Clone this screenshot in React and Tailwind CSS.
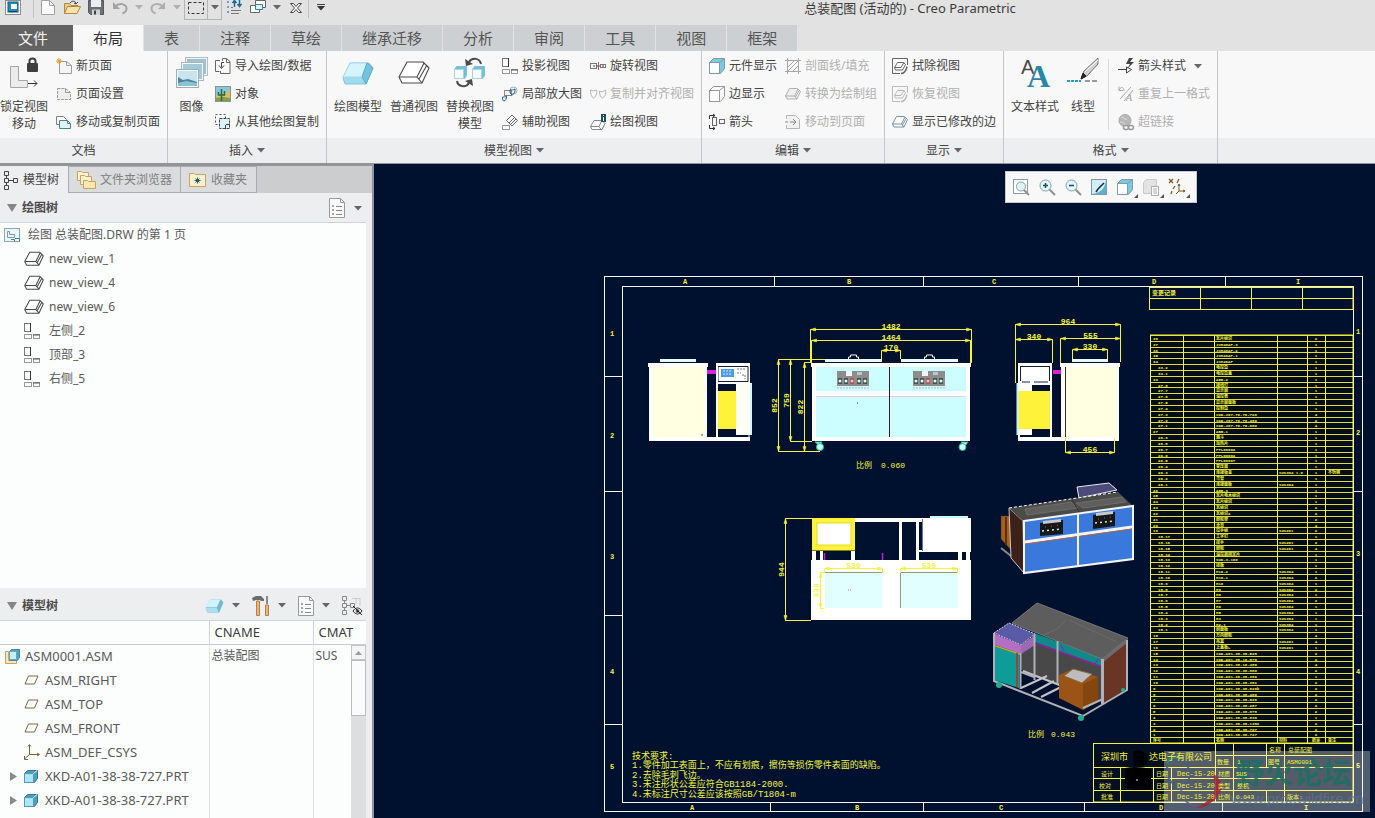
import React, { useState } from "react";

const Svg = ({ w = 16, h = 16, children }) => (
  <svg width={w} height={h} viewBox={`0 0 ${w} ${h}`} fill="none" stroke="#666" strokeWidth="1" className="shrink-0 overflow-visible" aria-hidden="true">
    {children}
  </svg>
);

const Caret = ({ color = "#666" }) => (
  <svg width="8" height="5" viewBox="0 0 8 5" className="shrink-0" aria-hidden="true">
    <path d="M0 0h8L4 4.500z" fill={color} />
  </svg>
);

// ---- quick access icons ----
const AppIcon = () => (
  <Svg w={16} h={16}>
    <rect x="0.500" y="0.500" width="15" height="14" fill="#fff" stroke="#8b8f93" />
    <rect x="3" y="2" width="10" height="10" fill="#1c8fc5" stroke="#16557d" />
    <rect x="6" y="4" width="6" height="5" fill="#fff" stroke="none" />
    <path d="M4 11.500h8" stroke="#0c3f5e" />
  </Svg>
);
const NewFile = () => (
  <Svg w={14} h={16}>
    <path d="M0.500 0.500h8l5 5v9h-13z" fill="#fdfdfd" stroke="#a0a0a0" />
    <path d="M8.500 0.500v5h5" stroke="#a0a0a0" />
  </Svg>
);
const OpenFile = () => (
  <Svg w={17} h={16}>
    <path d="M0.500 13.500v-10h5l1.500 2h7v2" fill="#f3c97b" stroke="#b3873f" />
    <path d="M0.500 13.500l3-7h13l-3.500 7z" fill="#fbe2a8" stroke="#b3873f" />
    <path d="M6 3c2-3 6-2 6 1M12 4l-2-1M12 4l2-2" stroke="#444" />
  </Svg>
);
const SaveFile = () => (
  <Svg w={16} h={16}>
    <path d="M0.500 0.500h15v14h-13l-2-2z" fill="#6c6f73" stroke="#55585c" />
    <rect x="3" y="0" width="10" height="7" fill="#e9eef2" stroke="none" />
    <rect x="4" y="9.500" width="8" height="5.500" fill="#cfd3d6" stroke="none" />
    <rect x="6" y="10.500" width="2" height="4" fill="#3e4145" stroke="none" />
  </Svg>
);
const Undo = () => (
  <Svg w={16} h={14}>
    <path d="M1 1v7h7z" fill="#a3a3a3" stroke="none" />
    <path d="M3.500 5.500c3-4 11-3 11 2 0 2-1.500 4-4 5" stroke="#a3a3a3" strokeWidth="2" />
  </Svg>
);
const Redo = () => (
  <Svg w={16} h={14}>
    <path d="M15 1v7h-7z" fill="#aeaeae" stroke="none" />
    <path d="M12.500 5.500c-3-4-11-3-11 2 0 2 1.500 4 4 5" stroke="#aeaeae" strokeWidth="2" />
  </Svg>
);
const SelectBox = () => (
  <Svg w={16} h={14}>
    <rect x="0.500" y="1.500" width="15" height="11" stroke="#333" strokeDasharray="3 2" />
  </Svg>
);
const Regenerate = () => (
  <Svg w={16} h={16}>
    <path d="M1.500 1.500h1v1h-1zM1.500 6.500h1v1h-1zM1.500 11.500h1v1h-1z" stroke="#4d8fb0" />
    <path d="M5 7.500h2M5 10.500h10M5 13.500h8" stroke="#777" />
    <path d="M8.500 7V1M6.500 3l2-2.500 2 2.500M13.500 0v6M11.500 4l2 2.500 2-2.500" stroke="#1b6b94" strokeWidth="1.500" />
  </Svg>
);
const Windows = () => (
  <Svg w={16} h={16}>
    <path d="M5.500 0.500h10v7h-10z" fill="#fff" stroke="#666" />
    <path d="M0.500 5.500h9v7h-9z" fill="#fff" stroke="#666" />
    <path d="M5.500 4.500h7v5h-7z" fill="#d9f0f7" stroke="#3c85a8" />
  </Svg>
);
const CloseX = () => (
  <Svg w={12} h={12}>
    <path d="M0.500 1.500h3l2.500 3 2.500-3h3l-4 4.500 4 4.500h-3l-2.500-3-2.500 3h-3l4-4.500z" fill="#fff" stroke="#444" />
  </Svg>
);

// ---- large ribbon icons ----
const LockView = () => (
  <Svg w={32} h={32}>
    <path d="M2.500 9.500h8v14h9v7h-17z" fill="#ececec" stroke="#a6a6a6" />
    <rect x="19" y="6" width="11" height="9" rx="1" fill="#3f3f3f" stroke="none" />
    <path d="M21.500 7V4c0-3.500 6-3.500 6 0v3" stroke="#3f3f3f" strokeWidth="2" />
    <path d="M20 26.500h9M26 23.500l3 3-3 3" stroke="#333" />
  </Svg>
);
const Images = () => (
  <Svg w={32} h={32}>
    <rect x="9.500" y="0.500" width="22" height="18" fill="#eef4f6" stroke="#b4c0c5" />
    <rect x="11" y="2" width="19" height="15" fill="#9cc3d2" stroke="none" />
    <rect x="5.500" y="5.500" width="22" height="18" fill="#f3f8f9" stroke="#a9b8bf" />
    <rect x="7" y="7" width="19" height="15" fill="#a4cad8" stroke="none" />
    <rect x="0.500" y="12.500" width="22" height="18" fill="#f9fcfd" stroke="#9dafb7" />
    <rect x="2" y="14" width="19" height="15" fill="#c8e4ee" stroke="none" />
    <path d="M2 20l5 3 5-1 9 3v4H2z" fill="#4a85a1" stroke="none" />
    <path d="M2 26l8-2 11 2v3H2z" fill="#8dc0d4" stroke="none" />
  </Svg>
);
const DrawingModel = () => (
  <Svg w={32} h={26}>
    <path d="M1 18l7-15h19l4 5-7 16H3z" fill="#9fdcf0" stroke="#86c3d6" />
    <path d="M8 3h17l-5 14H1z" fill="#d6f4fc" stroke="#a5dae9" />
    <path d="M25 3l6 5-7 16-4-7z" fill="#74c2dc" stroke="#5eadc8" />
  </Svg>
);
const Block = ({ w = 32, h = 26, stroke = "#4a4a4a", fill = "#fff" }) => (
  <svg width={w} height={h} viewBox="0 0 32 26" fill={fill} stroke={stroke} strokeWidth={w > 20 ? 1.1 : 1.7} strokeLinejoin="round" className="shrink-0" aria-hidden="true">
    <path d="M1 17L9 2h16l6 6-7 15H4z" />
    <path d="M1 17h18l7-14M19 17l5 6M21 19l8-14" fill="none" />
  </svg>
);
const ReplaceModel = () => (
  <Svg w={32} h={32}>
    <path d="M0.500 12.500l2-3h10v9l-2 3h-10z" fill="#6fc0da" stroke="#7fbdd1" />
    <rect x="0.500" y="12.500" width="9" height="9" fill="#f7fdff" stroke="#a9d5e3" />
    <path d="M18.500 12.500l2-3h10v9l-2 3h-10z" fill="#6fc0da" stroke="#7fbdd1" />
    <rect x="18.500" y="12.500" width="9" height="9" fill="#f7fdff" stroke="#a9d5e3" />
    <path d="M27 7c-1-6-9-7-12-2" stroke="#4a4a4a" strokeWidth="2" />
    <path d="M11 2l1 7 7-2z" fill="#4a4a4a" stroke="none" />
    <path d="M3 24c1 6 9 7 12 2" stroke="#4a4a4a" strokeWidth="2" />
    <path d="M19 29l-1-7-7 2z" fill="#4a4a4a" stroke="none" />
  </Svg>
);
const TextStyle = () => (
  <Svg w={30} h={32}>
    <text x="1" y="17" fontFamily="Liberation Sans" fontSize="20" fill="#4a4a4a" stroke="none">A</text>
    <text x="7" y="30" fontFamily="Liberation Serif" fontWeight="bold" fontSize="32" fill="#2a86a8" stroke="none">A</text>
  </Svg>
);
const LineStyle = () => (
  <Svg w={34} h={32}>
    <path d="M1 24h14" stroke="#2a9bc0" strokeWidth="2" strokeDasharray="3 1" />
    <path d="M19 24h14" stroke="#9a9a9a" strokeWidth="2" strokeDasharray="5 2" />
    <path d="M15 22l3-8L32 1v6L21 19z" fill="#cfcfcf" stroke="#777" />
    <path d="M15 22l2-6 3 3z" fill="#222" stroke="#222" />
    <path d="M19 15L32 3" stroke="#fff" />
  </Svg>
);

// ---- small ribbon icons ----
const NewPage = () => (
  <Svg>
    <path d="M3.500 3.500h7l5 4v8h-12z" fill="#f5f5f5" stroke="#9d9d9d" />
    <path d="M10.500 3.500v4h5" stroke="#9d9d9d" />
    <path d="M3 0v6M0 3h6M1 1l4 4M5 1l-4 4" stroke="#e9a01c" />
  </Svg>
);
const PageSetup = () => (
  <Svg>
    <path d="M1.500 2.500h8l5 4v7h-13z" fill="#eee" stroke="#999" strokeDasharray="3 1" />
    <path d="M9.500 2.500v4h5" stroke="#999" />
  </Svg>
);
const MovePages = () => (
  <Svg>
    <path d="M0.500 2.500h7l3 3v5h-10z" fill="#fff" stroke="#808080" />
    <path d="M3.500 6.500h8l3 3v5h-11z" fill="#dff4fa" stroke="#4d8296" />
    <path d="M11.500 6.500v3h3" stroke="#4d8296" />
  </Svg>
);
const ImportIcon = () => (
  <Svg>
    <path d="M5 2.500h-4.500v11h4M7.500 3V0.500h4l3.500 3v12H5.500V13" stroke="#666" />
    <path d="M11.500 1v3.500h3.500" stroke="#666" />
    <path d="M9 4.500H6.500v5M4 7.500l2.500 3 2.500-3" stroke="#444" />
  </Svg>
);
const ObjectIcon = () => (
  <Svg>
    <rect x="0.500" y="0.500" width="15" height="15" fill="#8cc4e0" stroke="#7d9a8a" />
    <path d="M1 9l6-1 8-4v11H1z" fill="#d3bf6d" stroke="none" />
    <path d="M1 12l7-1 7 1v3H1z" fill="#8c994c" stroke="none" />
    <path d="M6.500 15V3M3.500 6v3h3M9.500 5v4h-3" stroke="#2c6b40" strokeWidth="1.500" />
  </Svg>
);
const CopyDrawing = () => (
  <Svg>
    <rect x="0.500" y="0.500" width="10" height="10" stroke="#555" strokeDasharray="2 2" />
    <rect x="4.500" y="4.500" width="10" height="10" fill="#d9f1f8" stroke="#444" strokeDasharray="3 1" />
    <path d="M11 10.500h4M10.500 11v4" stroke="#444" />
  </Svg>
);
const Projection = () => (
  <Svg>
    <rect x="0.500" y="0.500" width="6" height="8" fill="#fff" stroke="#777" />
    <path d="M6.500 0v9" stroke="#333" />
    <rect x="0.500" y="11.500" width="7" height="4" fill="#fff" stroke="#999" />
    <rect x="9.500" y="11.500" width="6" height="4" fill="#fff" stroke="#999" />
    <path d="M9 12h7" stroke="#555" />
  </Svg>
);
const Detailed = () => (
  <Svg>
    <circle cx="11.500" cy="4.500" r="3.500" stroke="#9ab" />
    <rect x="2.500" y="4.500" width="7" height="5" stroke="#888" />
    <path d="M8 4c2 0 3 0 5-1 0 4-1 5-3 6-2-1-2-3-2-5zM0.500 11c1 0 3 0 4-1 0 3-1 5-3 5-1-1-1-2-1-4z" stroke="#1b5d85" />
  </Svg>
);
const Auxiliary = () => (
  <Svg>
    <path d="M4.500 6.500L10 1l5.500 5.500-5.500 5.500zM7 9l5.500-5.500M8.500 10.500L14 5" stroke="#666" />
    <rect x="0.500" y="11.500" width="7" height="4" fill="#fff" stroke="#999" />
  </Svg>
);
const Rotated = () => (
  <Svg>
    <rect x="0.500" y="5.500" width="6" height="5" stroke="#777" />
    <path d="M3 8h13" stroke="#444" strokeDasharray="2 1" />
    <rect x="10.500" y="6.500" width="5" height="3" stroke="#777" />
    <path d="M8.500 4v8" stroke="#a66" />
  </Svg>
);
const CopyAlign = () => (
  <Svg>
    <path d="M0.500 4c2 1 4 1 6 0 1 4-1 7-3 8-2-1-3-4-3-8zM9.500 5c2 1 4 1 6-1 1 4-1 7-3 8-2-1-3-3-3-7z" stroke="#b5b5b5" />
  </Svg>
);
const DrawingView = () => (
  <Svg>
    <path d="M0.500 12.500L4 6.500h8l3 3-3 6H2zM0.500 12.500H9l3-6M9 12.500l2 3" fill="#fff" stroke="#8a8a8a" />
    <rect x="11" y="0" width="5" height="8" fill="#1d5069" stroke="none" />
    <path d="M13.500 3v4M13.500 1v1" stroke="#fff" />
  </Svg>
);
const Cube = ({ right = "#7cc9e2", stroke = "#7f9ba5" }) => (
  <Svg>
    <path d="M0.500 4.500l4-4h11v10l-4 5h-11z" fill={right} stroke={stroke} />
    <path d="M0.500 4.500h10v11h-10z" fill="#fdfdfd" stroke={stroke} />
    <path d="M10.500 4.500l5-4" stroke={stroke} />
  </Svg>
);
const ArrowsIcon = () => (
  <Svg>
    <rect x="3.500" y="3.500" width="4" height="8" stroke="#666" />
    <rect x="10.500" y="5.500" width="5" height="4" stroke="#666" />
    <path d="M0.500 5V1.500H6M4 0l2 1.500L4 3M0.500 11v3.500H6M4 13l2 1.500L4 16" stroke="#333" />
  </Svg>
);
const Hatch = () => (
  <Svg>
    <path d="M2.500 0v16M13.500 0v16M0 2.500h16M0 13.500h16M3 9l6-6M3 13L13 3M8 13l5-5" stroke="#a8a8a8" />
  </Svg>
);
const MoveToPage = () => (
  <Svg>
    <path d="M1.500 5V1.500h9l4 4v9h-13V11" fill="#f1f1f1" stroke="#b5b5b5" />
    <path d="M0 8h3M5 8h6M8 5l3 3-3 3" stroke="#888" />
  </Svg>
);
const FramedView = ({ stroke }) => (
  <Svg>
    <path d="M15.500 7V0.500H0.500v15H8" stroke={stroke} />
    <path d="M2.500 9.500l3-5h6l2 2-3 5.500h-7zM2.500 9.500H9l3-5" stroke={stroke} />
    <path d="M9 15.500c3 0 5-2 6-7" stroke={stroke} strokeWidth="1.500" />
  </Svg>
);
const ArrowStyle = () => (
  <Svg>
    <path d="M0 11.500h9M8.500 9l5 2.500-5 3.500z" stroke="#444" />
    <path d="M11 0L8 6h4l-3 5 7-7h-4l3-4z" fill="#444" stroke="none" />
  </Svg>
);
const RepeatFormat = () => (
  <Svg>
    <path d="M1 0.500v4h4M1 4c2-4 5-3 5 1M2 13L13 1M6 15L15 4" stroke="#aaa" />
    <text x="8" y="15" fontSize="10" fontStyle="italic" fontFamily="Liberation Serif" fill="#a0a0a0" stroke="none">A</text>
  </Svg>
);
const Hyperlink = () => (
  <Svg>
    <circle cx="7" cy="6.500" r="6" fill="#b8b8b8" stroke="#a8a8a8" />
    <path d="M3 3c3 0 3 3 6 2M2 8c4 0 5 2 5 4" stroke="#dedede" />
    <rect x="5.500" y="11.500" width="5" height="4" rx="2" fill="#f8f8f8" stroke="#999" strokeWidth="1.500" />
    <rect x="10.500" y="11.500" width="5" height="4" rx="2" fill="#f8f8f8" stroke="#999" strokeWidth="1.500" />
  </Svg>
);

// ---- panel icons ----
const TreeIcon = () => (
  <Svg w={14} h={20}>
    <path d="M0.500 1.500h4v4h-4zM0.500 8.500h4v4h-4zM0.500 15.500h4v4h-4zM9.500 8.500h4v4h-4zM2.500 5.500v3M2.500 12.500v3M4.500 10.500h5" stroke="#444" />
  </Svg>
);
const Folders = () => (
  <Svg w={19} h={20}>
    <path d="M0.500 1.500h4l1 1h6v8h-11z" fill="#fdf0cf" stroke="#c9a35f" />
    <path d="M3.500 5.500h4l1 1h6v8h-11z" fill="#fdf0cf" stroke="#c9a35f" />
    <path d="M6.500 10.500h4l1 1h7v7h-12z" fill="#fde6b0" stroke="#c9a35f" />
  </Svg>
);
const FavFolder = () => (
  <Svg w={17} h={16}>
    <path d="M0.500 1.500h5l1 1h10v12h-16z" fill="#fdf0cf" stroke="#c9a35f" />
    <path d="M8.500 5.500v6M5.500 8.500h6M6.500 6.500l4 4M10.500 6.500l-4 4" stroke="#1d5b6b" />
  </Svg>
);
const ListPage = () => (
  <Svg w={16} h={20}>
    <path d="M0.500 0.500h11l4 4v15h-15z" fill="#fafafa" stroke="#999" />
    <path d="M11.500 0.500v4h4" stroke="#999" />
    <path d="M7 8.500h6M7 12.500h6M7 16.500h6" stroke="#888" />
    <path d="M3.500 7.500h1v1h-1zM3.500 11.500h1v1h-1zM3.500 15.500h1v1h-1z" stroke="#888" />
  </Svg>
);
const SheetIcon = () => (
  <Svg w={16} h={14}>
    <rect x="0.500" y="0.500" width="15" height="13" fill="#eaf6fa" stroke="#8fa7b3" />
    <path d="M3.500 3.500h2v3h5v3h-7z" stroke="#7a98a7" />
    <path d="M7 11.500h3.500v2M11 10.500h4.500v3" stroke="#2f87aa" />
  </Svg>
);
const Tools = () => (
  <Svg w={18} h={20}>
    <path d="M0 2l4-2h5l3 3v2H9L8 4H4L1 5z" fill="#6b6b6b" stroke="none" />
    <path d="M4.500 5h3v14.500h-3z" fill="#eab57d" stroke="#b98046" />
    <path d="M14 0h2v8h-2z" fill="#888" stroke="none" />
    <path d="M13.500 9h3v10.500h-3z" fill="#eab57d" stroke="#b98046" />
  </Svg>
);
const TreeHidden = () => (
  <Svg w={21} h={20}>
    <path d="M0.500 0.500h4v4h-4zM0.500 7.500h4v4h-4zM0.500 14.500h4v4h-4zM2.500 4.500v3M2.500 11.500v3M4.500 9.500h4M8.500 7.500h4v4h-4z" stroke="#888" />
    <path d="M10 2.500h8M18 2v8M14 2v6" stroke="#ccc" />
    <path d="M11 15c3-4 6-4 9 0-3 4-6 4-9 0z" fill="#fff" stroke="#222" />
    <circle cx="15.500" cy="15" r="1.500" fill="#222" />
    <path d="M11 10l9 9" stroke="#222" />
  </Svg>
);
const AsmIcon = () => (
  <Svg w={15} h={15}>
    <path d="M0.500 2.500h3v9h8v3h-11z" fill="#fbe6b8" stroke="#c9a35f" />
    <path d="M4.500 2.500l2-2h8v8l-2 3h-8z" fill="#4aa3c7" stroke="#4a8aa5" />
    <path d="M4.500 2.500h7v8h-7z" fill="#c6effc" stroke="#6ba8bf" />
  </Svg>
);
const PlaneIcon = () => (
  <Svg w={15} h={10}>
    <path d="M4.500 1h9.500L10.500 9H1z" stroke="#7d6743" />
  </Svg>
);
const CsysIcon = () => (
  <Svg w={16} h={16}>
    <path d="M5.500 1v9.500H15M5.500 10.500L0.500 15M4 2.500L5.500 0.500 7 2.500M13 9l2.500 1.500L13 12M0.500 12v3.500H4" stroke="#7d6743" />
  </Svg>
);
const PartIcon = () => (
  <Svg w={14} h={13}>
    <path d="M0.500 3.500l3-3h10v8l-3 4h-10z" fill="#4a9fbe" stroke="#3d758c" />
    <path d="M0.500 3.500h9v9h-9z" fill="#a9e6f7" stroke="#5a97ad" />
    <path d="M9.500 3.500l3.500-3" stroke="#cdf3fd" />
  </Svg>
);

// ---- view toolbar icons ----
const Magnifier = ({ children, boxed }) => (
  <Svg w={17} h={17}>
    {boxed && <rect x="0.500" y="0.500" width="14" height="14" fill="#fff" stroke="#8c9aa3" />}
    <path d="M10 10l6 6" stroke="#9a8d86" strokeWidth="2" />
    <circle cx={boxed ? 8 : 6.5} cy={boxed ? 7.5 : 6.5} r={boxed ? 4.5 : 5.5} fill="#e6f5fa" stroke="#7aa1b1" />
    {children}
  </Svg>
);
const Repaint = () => (
  <Svg w={16} h={16}>
    <rect x="0.500" y="0.500" width="15" height="15" fill="#d4eef7" stroke="#8397a2" />
    <path d="M1 15C10 14 14 9 15 1v14z" fill="#5fb2cf" stroke="none" />
    <path d="M5 13l2-3 6-6" stroke="#14303c" strokeWidth="1.500" />
  </Svg>
);
const FadedCube = () => (
  <Svg w={17} h={17}>
    <path d="M0.500 3.500l3-3h10v9l-3 5h-10z" fill="#e3e3e3" stroke="#c9c9c9" />
    <rect x="8.500" y="7.500" width="7" height="9" fill="#fff" stroke="#b0b0b0" />
    <path d="M10 10h4M10 12h4M10 14h4" stroke="#b0b0b0" />
  </Svg>
);
const DatumFilter = () => (
  <Svg w={18} h={18}>
    <path d="M1 1l4 4M5 1L1 5M11 1l-2 4M7 8l-2 3M4 13l-1 3" stroke="#7b5a2a" strokeWidth="1.300" />
    <path d="M11 6v7h6M11 13l-3 3M10 8l1-2 1 2M15 12l2 1-2 1" stroke="#7b5a2a" />
  </Svg>
);

const LargeButton = ({ icon, lines, width = "w-14" }) => (
  <button className={`flex flex-col items-center pt-[6px] ${width}`}>
    <span className="flex h-8 items-center justify-center">{icon}</span>
    <span className="mt-[9px] flex flex-col whitespace-nowrap text-xs leading-[17px]">
      {lines.map((l) => <span key={l}>{l}</span>)}
    </span>
  </button>
);

const SmallButton = ({ icon, label, off, menu }) => (
  <button disabled={off} className={`flex h-7 items-center gap-1 whitespace-nowrap text-xs ${off ? "text-[#b0b0b0]" : "text-[#444]"}`}>
    {icon}
    <span>{label}</span>
    {menu && <span className="ml-1"><Caret /></span>}
  </button>
);

const Column = ({ items }) => (
  <div className="flex flex-col pt-px">
    {items.map((i) => <SmallButton key={i.label} {...i} />)}
  </div>
);

const Group = ({ title, menu, className = "", children }) => (
  <section className="flex flex-col border-r border-[#c3c6c8]">
    <div className={`flex h-[87px] pr-[7px] ${className}`}>{children}</div>
    <button className="flex h-[25px] items-center justify-center gap-1 bg-[#edeef0] text-xs">
      {title}
      {menu && <Caret />}
    </button>
  </section>
);

const tabs = ["布局", "表", "注释", "草绘", "继承迁移", "分析", "审阅", "工具", "视图", "框架"];

function QuickBar() {
  const big = "flex w-6 justify-center";
  const small = "flex w-[14px] justify-center";
  return (
    <div className="flex h-[25px] items-start">
      <div className="flex h-[15px] items-center">
        <button aria-label="Creo" className="flex w-[26px] justify-center"><AppIcon /></button>
        <span className="ml-[7px] mr-[2px] h-5 w-px bg-[#c0c2c4]" />
        <button aria-label="新建" className={big}><NewFile /></button>
        <button aria-label="打开" className={big}><OpenFile /></button>
        <button aria-label="保存" className={big}><SaveFile /></button>
        <button aria-label="撤销" className={big}><Undo /></button>
        <button aria-label="撤销列表" className={small}><Caret color="#b0b0b0" /></button>
        <button aria-label="重做" className={big}><Redo /></button>
        <button aria-label="重做列表" className={small}><Caret color="#b0b0b0" /></button>
        <button aria-label="选择框" className="flex h-6 w-6 items-center justify-center border border-[#b3b6b8]"><SelectBox /></button>
        <button aria-label="选择列表" className="flex h-6 w-[14px] items-center justify-center border border-l-0 border-[#b3b6b8]"><Caret /></button>
        <button aria-label="重新生成" className={big}><Regenerate /></button>
        <button aria-label="窗口" className={big}><Windows /></button>
        <button aria-label="窗口列表" className={small}><Caret /></button>
        <button aria-label="关闭" className={big}><CloseX /></button>
        <span className="h-5 w-px bg-[#c0c2c4]" />
        <button aria-label="自定义" className="flex w-6 flex-col items-center gap-px">
          <span className="h-px w-2 bg-[#444]" />
          <Caret color="#333" />
        </button>
      </div>
      <h1 className="flex-1 pl-[112px] text-center text-[13px] leading-4 text-[#3c3c3c]">总装配图 (活动的) - Creo Parametric</h1>
    </div>
  );
}

function Ribbon() {
  const [active, setActive] = useState("布局");
  return (
    <header className="bg-[#e2e2e2]">
      <QuickBar />
      <nav className="flex h-[26px] text-[15px] leading-[25px] text-[#555]">
        <button className="bg-[#636363] pl-[18px] pr-[25px] text-[#f2f2f2]">文件</button>
        {tabs.map((t) => (
          <button
            key={t}
            onClick={() => setActive(t)}
            className={`border-r border-[#e2e2e2] px-5 ${active === t ? "bg-[#f8f8f8] text-[#333]" : "bg-[#cdd0d2]"}`}
          >
            {t}
          </button>
        ))}
      </nav>
      <div className="flex border-b border-[#8f9499] bg-[#f8f8f8] text-[#444]">
        <Group title="文档">
          <LargeButton width="w-12" icon={<LockView />} lines={["锁定视图", "移动"]} />
          <div className="pl-2">
            <Column items={[
              { icon: <NewPage />, label: "新页面" },
              { icon: <PageSetup />, label: "页面设置" },
              { icon: <MovePages />, label: "移动或复制页面" },
            ]} />
          </div>
        </Group>
        <Group title="插入" menu>
          <LargeButton width="w-[47px]" icon={<Images />} lines={["图像"]} />
          <Column items={[
            { icon: <ImportIcon />, label: "导入绘图/数据" },
            { icon: <ObjectIcon />, label: "对象" },
            { icon: <CopyDrawing />, label: "从其他绘图复制" },
          ]} />
        </Group>
        <Group title="模型视图" menu className="pl-[3px]">
          <LargeButton icon={<DrawingModel />} lines={["绘图模型"]} />
          <LargeButton icon={<Block />} lines={["普通视图"]} />
          <LargeButton icon={<ReplaceModel />} lines={["替换视图", "模型"]} />
          <div className="flex gap-2 pl-1">
            <Column items={[
              { icon: <Projection />, label: "投影视图" },
              { icon: <Detailed />, label: "局部放大图" },
              { icon: <Auxiliary />, label: "辅助视图" },
            ]} />
            <Column items={[
              { icon: <Rotated />, label: "旋转视图" },
              { icon: <CopyAlign />, label: "复制并对齐视图", off: true },
              { icon: <DrawingView />, label: "绘图视图" },
            ]} />
          </div>
        </Group>
        <Group title="编辑" menu className="gap-2 pl-[7px]">
          <Column items={[
            { icon: <Cube />, label: "元件显示" },
            { icon: <Cube right="#fdfdfd" stroke="#999" />, label: "边显示" },
            { icon: <ArrowsIcon />, label: "箭头" },
          ]} />
          <Column items={[
            { icon: <Hatch />, label: "剖面线/填充", off: true },
            { icon: <Block w={16} h={14} stroke="#a3a3a3" fill="#f0f0f0" />, label: "转换为绘制组", off: true },
            { icon: <MoveToPage />, label: "移动到页面", off: true },
          ]} />
        </Group>
        <Group title="显示" menu className="pl-[7px]">
          <Column items={[
            { icon: <FramedView stroke="#666" />, label: "拭除视图" },
            { icon: <FramedView stroke="#bbb" />, label: "恢复视图", off: true },
            { icon: <Block w={16} h={14} stroke="#5e8299" />, label: "显示已修改的边" },
          ]} />
        </Group>
        <Group title="格式" menu className="pl-[3px]">
          <LargeButton icon={<TextStyle />} lines={["文本样式"]} />
          <LargeButton width="w-10" icon={<LineStyle />} lines={["线型"]} />
          <div className="my-2 ml-[5px] mr-[9px] w-px bg-[#d9dbdc]" />
          <Column items={[
            { icon: <ArrowStyle />, label: "箭头样式", menu: true },
            { icon: <RepeatFormat />, label: "重复上一格式", off: true },
            { icon: <Hyperlink />, label: "超链接", off: true },
          ]} />
        </Group>
        <div className="flex flex-1 flex-col justify-end">
          <div className="h-[25px] bg-[#edeef0]" />
        </div>
      </div>
    </header>
  );
}

const viewNodes = [
  { name: "new_view_1", block: true },
  { name: "new_view_4", block: true },
  { name: "new_view_6", block: true },
  { name: "左侧_2" },
  { name: "顶部_3" },
  { name: "右侧_5" },
];

const modelNodes = [
  { name: "ASM_RIGHT", icon: <PlaneIcon /> },
  { name: "ASM_TOP", icon: <PlaneIcon /> },
  { name: "ASM_FRONT", icon: <PlaneIcon /> },
  { name: "ASM_DEF_CSYS", icon: <CsysIcon /> },
  { name: "XKD-A01-38-38-727.PRT", icon: <PartIcon />, open: true },
  { name: "XKD-A01-38-38-727.PRT", icon: <PartIcon />, open: true },
];

const Fold = () => (
  <svg width="10" height="8" viewBox="0 0 10 8" className="shrink-0" aria-hidden="true"><path d="M0 0h10L5 8z" fill="#858585" /></svg>
);

function SidePanel() {
  return (
    <aside className="flex w-[374px] shrink-0 flex-col border-r-2 border-t-2 border-r-[#8b94a3] border-t-[#949494] bg-[#edeef0] pr-[6px] text-xs text-[#5a5a5a]">
      <div className="-mr-[6px] flex h-[27px] bg-[#cbcdce]">
        <button className="flex w-[68px] items-center gap-[5px] bg-[#edeef0] pl-1 text-[#444]"><TreeIcon />模型树</button>
        <button className="flex w-[113px] items-center gap-1 border border-[#a9acae] bg-[#dadcdd] pl-2 text-[#808080]"><Folders />文件夹浏览器</button>
        <button className="flex w-[76px] items-center gap-[5px] border border-l-0 border-[#a9acae] bg-[#dadcdd] pl-2 text-[#808080]"><FavFolder />收藏夹</button>
      </div>
      <div className="flex h-[30px] items-center border-b border-[#cbd6da] pl-[7px] pt-px">
        <Fold />
        <h2 className="flex-1 pl-[5px] font-bold text-[#4a4a4a]">绘图树</h2>
        <button aria-label="树设置" className="flex items-center gap-[9px] pr-1"><ListPage /><Caret /></button>
      </div>
      <ul className="flex-1 bg-[#fcfdfd]">
        <li className="flex h-6 items-center gap-2 pl-1"><SheetIcon />绘图 总装配图.DRW 的第 1 页</li>
        {viewNodes.map((n) => (
          <li key={n.name} className="flex h-6 items-center pl-6">
            <span className="w-[25px]">{n.block ? <Block w={20} h={16} /> : <Projection />}</span>
            {n.name}
          </li>
        ))}
      </ul>
      <div className="flex h-[33px] items-center border-b border-[#cbd6da] pl-[7px] pt-[3px]">
        <Fold />
        <h2 className="flex-1 pl-[5px] font-bold text-[#4a4a4a]">模型树</h2>
        <div className="flex items-center gap-3 pr-[3px]">
          <button aria-label="模型显示" className="flex items-center gap-2">
            <svg width="19" height="16" viewBox="0 0 32 26" aria-hidden="true">
              <path d="M1 16L9 2h18l4 5-7 17H4z" fill="#6fb9d3" />
              <path d="M9 2h17l-6 13H1z" fill="#d3f3fc" />
              <path d="M1 16h19l3 8H4z" fill="#a8e0f2" />
            </svg>
            <Caret />
          </button>
          <button aria-label="工具" className="flex items-center gap-2"><Tools /><Caret /></button>
          <button aria-label="列表" className="flex items-center gap-2"><ListPage /><Caret /></button>
          <button aria-label="隐藏"><TreeHidden /></button>
        </div>
      </div>
      <div className="relative">
        <table className="w-full table-fixed border-collapse bg-[#fcfdfd] text-left">
          <thead className="text-[13px] text-[#3c3c3c]">
            <tr className="h-[23px] border-b border-[#c9cccf]">
              <th className="w-[209px] border-r border-[#cfd3d5]" aria-label="名称" />
              <th className="w-[104px] border-r border-[#cfd3d5] pl-[5px] font-normal leading-4">CNAME</th>
              <th className="pl-[5px] font-normal leading-4">CMAT</th>
            </tr>
          </thead>
          <tbody>
            <tr className="h-6">
              <td className="border-r border-[#dfe3e5] py-0">
                <span className="flex items-center gap-[5px] pl-[5px] text-[13px] leading-4"><AsmIcon />ASM0001.ASM</span>
              </td>
              <td className="border-r border-[#dfe3e5] py-0 pl-[2px]">总装配图</td>
              <td className="py-0 pl-[2px]">SUS</td>
            </tr>
            {modelNodes.map((n, i) => (
              <tr key={i} className="h-6">
                <td className="border-r border-[#dfe3e5] py-0">
                  <span className="flex items-center whitespace-nowrap pl-[10px] text-[13px] leading-4">
                    <span className="w-[14px]">
                      {n.open && <svg width="8" height="9" viewBox="0 0 8 9" aria-hidden="true"><path d="M0 0v9l7-4.500z" fill="#8a8a8a" /></svg>}
                    </span>
                    <span className="w-[21px]">{n.icon}</span>
                    {n.name}
                  </span>
                </td>
                <td className="border-r border-[#dfe3e5]" />
                <td />
              </tr>
            ))}
            <tr className="h-[6px]">
              <td className="border-r border-[#dfe3e5] p-0" />
              <td className="border-r border-[#dfe3e5] p-0" />
              <td className="p-0" />
            </tr>
          </tbody>
        </table>
        <div className="absolute bottom-0 right-0 top-6 flex w-[15px] flex-col bg-[#dcdee0]">
          <button aria-label="向上滚动" className="flex h-[15px] items-center justify-center border border-[#c3c6c8] bg-[#f4f4f4]">
            <svg width="7" height="4" viewBox="0 0 7 4" aria-hidden="true"><path d="M0 4h7L3.500 0z" fill="#9a9a9a" /></svg>
          </button>
          <div className="h-[56px] border border-[#b9bcbe] bg-[#fbfbfb]" />
        </div>
      </div>
    </aside>
  );
}

const Y = "#f4f43a";
const cad = "'Liberation Mono', 'Noto Sans CJK SC', monospace";

const Note = ({ x, y, size = 8, children, anchor = "start" }) => (
  <text x={x} y={y} fontSize={size} textAnchor={anchor}>{children}</text>
);

// horizontal dimension with witness lines to e1 / e2
const DimH = ({ x1, x2, y, e1, e2, label, lift = 1 }) => (
  <g>
    <path d={`M${x1} ${e1}V${y}H${x2}V${e2}`} fill="none" stroke={Y} />
    <path d={`M${x1} ${y}l5-1.500v3zM${x2} ${y}l-5-1.500v3z`} fill={Y} stroke={Y} strokeWidth="0.500" />
    <text x={(x1 + x2) / 2} y={y - lift} fontSize="8" fontWeight="bold" textAnchor="middle" fill={Y}>{label}</text>
  </g>
);

const DimV = ({ x, y1, y2, e1, e2, label }) => (
  <g>
    <path d={`M${e1} ${y1}H${x}V${y2}H${e2}`} fill="none" stroke={Y} />
    <path d={`M${x} ${y1}l-1.500 5h3zM${x} ${y2}l-1.500-5h3z`} fill={Y} stroke={Y} strokeWidth="0.500" />
    <text transform={`translate(${x - 2} ${(y1 + y2) / 2}) rotate(-90)`} fontSize="8" fontWeight="bold" textAnchor="middle" fill={Y}>{label}</text>
  </g>
);

const bom = [
  ["38", "瓦片标识", "", "2"], ["37", "JXH40AP-3"], ["36", "JXH40AP-2"], ["35", "JXH40AP-1"], ["34", "JXH40AP"],
  ["33.2", "电控盒"], ["33.1", "电控盒盖"], ["33", "ABB-2"],
  ["27.8", "接线灯"], ["27.7", "显示屏"], ["27.6", "温控表"], ["27.5", "显示屏面板"], ["27.4", "控制盒"],
  ["27.3", "XKD-J07-70-70-720", "", "4"], ["27.2", "XKD-J07-70-70-480", "", "2"], ["27.1", "XKD-J07-70-70-680", "", "4"],
  ["27", "ABB-1"], ["26.9", "漏斗"], ["26.8", "加热片"], ["26.7", "FFL00002"], ["26.6", "FFL00002"], ["26.5", "FFL00007"],
  ["26.4", "变压器"], ["26.3", "连接钣金", "SUS304 1.0", "1", "不锈钢"], ["26.2", "弯管"], ["26.1", "连接面板", "SUS304"],
  ["26", "ABB-3"], ["25", "瓦片电木标识"], ["24", "瓦片标识"], ["23", "瓦标识", "", "2"], ["22", "瓦标识2", "", "2"],
  ["21", "脚轮架", "", "2"], ["20", "合页", "", "4"], ["19", "拉手标", "SUS201", "2"], ["18.17", "工字钉"],
  ["18.16", "提手", "SUS201", "2"], ["18.15", "脚轮", "SUS201", "4"], ["18.14", "温控器固定片"], ["18.13", "SWD-3-100"],
  ["18.12", "挂板"], ["18.11", "H10-2", "SUS304"], ["18.10", "H10-1", "SUS304", "2"], ["18.9", "H10", "SUS304"],
  ["18.8", "H9", "SUS304", "2"], ["18.7", "H8", "SUS304"], ["18.6", "H7", "SUS304", "2"], ["18.5", "H6", "SUS304"],
  ["18.4", "H5", "SUS304"], ["18.3", "H3", "SUS304"], ["18.2", "H2-1", "SUS304"], ["18.1", "前面板", "SUS304"],
  ["18", "万向脚轮", "", "4"], ["17", "吊耳", "SUS201", "4"], ["16", "上盖板L", "SUS201"],
  ["15", "XKD-A01-38-38-528", "", "2"], ["14", "XKD-A01-38-10-878", "", "2"], ["13", "XKD-A01-38-10-480", "", "4"],
  ["12", "XKD-A01-38-38-880", "", "2"], ["11", "XKD-A01-38-38-38a"], ["10", "XKD-A01-38-38-38c", "", "2"],
  ["9", "XKD-A01-38-38-826b", "", "2"], ["8", "XKD-A01-38-38-480", "", "2"], ["7", "XKD-A01-38-38-826", "", "2"],
  ["6", "XKD-A01-38-38-287", "", "2"], ["5", "XKD-A01-38-38-878", "", "2"], ["4", "XKD-A01-38-38-830"],
  ["3", "XKD-A01-38-38-1382", "", "2"], ["2", "XKD-A01-38-38-727", "", "2"], ["1", "XKD-A01-38-38-727", "", "2"],
];

function BillOfMaterials() {
  const top = 335;
  const bottom = 743;
  const pitch = (bottom - top) / (bom.length + 1);
  const rows = [...bom, ["序号", "名称", "材料", "数量", "备注"]];
  return (
    <g>
      <rect x="1150.500" y={top} width="202.500" height={bottom - top} fill="#030d1a" stroke={Y} />
      <path d="M1183.500 335V743M1214.500 335V743M1277.500 335V743M1307.500 335V743M1325.500 335V743" stroke={Y} />
      {rows.map((r, i) => {
        const y = top + i * pitch;
        return (
          <g key={i} fill={Y} fontSize="4" fontWeight="bold">
            <path d={`M1150 ${Math.round(y) + 0.5}H1353`} stroke={Y} strokeOpacity="0.9" />
            <text x={r[0].includes(".") ? 1158 : 1153} y={y + 5}>{r[0]}</text>
            <text x="1216" y={y + 5}>{r[1]}</text>
            <text x="1279" y={y + 5}>{r[2]}</text>
            <text x="1316" y={y + 5} textAnchor="middle">{r[3] || "1"}</text>
            <text x="1328" y={y + 5}>{r[4]}</text>
          </g>
        );
      })}
    </g>
  );
}

function SheetFrame() {
  return (
    <g>
      <g fill="none" stroke="#f2f6fa">
        <rect x="604.500" y="276.500" width="758" height="535" />
        <rect x="622.500" y="286.500" width="731" height="516" />
        <path d="M774.500 276v10M923.500 276v10M1078.500 276v10M1225.500 276v10" />
        <path d="M770.500 803v9M923.500 803v9M1084.500 803v9M1222.500 803v9" />
        <path d="M604 376.500h18M604 491.500h18M604 615.500h18M604 724.500h18" />
        <path d="M1353 376.500h9M1353 491.500h9M1353 615.500h9M1353 724.500h9" />
      </g>
      <g fill={Y} fontSize="7" textAnchor="middle" fontWeight="bold">
        {[["A", 685], ["B", 849], ["C", 994], ["D", 1154], ["I", 1298]].map(([t, x]) => <text key={x} x={x} y="284">{t}</text>)}
        {[["A", 692], ["B", 857], ["C", 1001], ["D", 1161], ["I", 1306]].map(([t, x]) => <text key={x} x={x} y="810">{t}</text>)}
        {[336, 438, 559, 674, 769].map((y, i) => <text key={y} x="612" y={y}>{i + 1}</text>)}
        {[334, 435, 556, 674, 768].map((y, i) => <text key={y} x="1358" y={y}>{i + 1}</text>)}
      </g>
      <g fill="none" stroke={Y}>
        <rect x="1149.500" y="287.500" width="203.500" height="22" />
        <path d="M1149 298.500h204M1200.500 287v22M1251.500 287v22M1302.500 287v22" />
      </g>
      <g fill={Y} fontWeight="bold"><Note x={1152} y={295} size={6}>变更记录</Note></g>
    </g>
  );
}

const ControlPanel = ({ x, y }) => (
  <g>
    <rect x={x} y={y} width="32" height="15" fill="#8c8c8c" />
    <rect x={x + 9} y={y} width="6" height="5" fill="#f4f4f4" />
    <rect x={x + 20} y={y + 1} width="5" height="3" fill="#b9c7cc" />
    {[3, 9, 15, 22, 28].map((d, i) => (
      <g key={d}>
        <rect x={x + d - 2} y={y + 7} width="4" height="6" fill={i === 2 ? "#a55" : "#4b4f4f"} />
        <circle cx={x + d} cy={y + 10} r="1.500" fill={i === 2 ? "#fbb" : "#d5fff5"} />
      </g>
    ))}
    <path d={`M${x} ${y + 17}h32`} stroke="#bbb" strokeDasharray="2 1" />
  </g>
);

function LeftView() {
  return (
    <g>
      <rect x="649" y="366" width="58" height="75" fill="#fff" />
      <rect x="653" y="367" width="51" height="70" fill="#ffffe2" />
      <rect x="648" y="363" width="60" height="4" fill="#fff" />
      <rect x="660" y="359" width="36" height="3" fill="#e4fbff" />
      <rect x="649" y="437" width="101" height="4" fill="#fff" />
      <rect x="707" y="370" width="9" height="4" fill="#e21fd8" />
      <rect x="716" y="363" width="34" height="21" fill="#fff" />
      <path d="M718 366.500h30v15h-30z" fill="none" stroke="#12213d" />
      <rect x="721" y="369" width="13" height="8" fill="#4f9be6" />
      <path d="M723 371h8M723 374h9" stroke="#d7ecff" strokeDasharray="2 1" />
      <path d="M737 369h9M737 373h4M742 375h3v4" stroke="#777" fill="none" strokeDasharray="2 1" />
      <path d="M717 363v76" stroke="#fff" strokeWidth="2" />
      <rect x="718" y="391" width="18" height="38" fill="#fff23a" />
      <rect x="736" y="383" width="16" height="52" fill="#fdfff5" />
      <path d="M751 384v50" stroke="#d3f7ff" strokeWidth="2" />
      <path d="M749 434v5" stroke="#fff" />
      <circle cx="702" cy="435" r="0.800" fill="#333" />
    </g>
  );
}

function FrontView() {
  return (
    <g>
      <rect x="812" y="363" width="158" height="78" fill="#fff" />
      <rect x="811" y="363" width="160" height="4" fill="#fff" />
      <rect x="825" y="359" width="57" height="3" fill="#e4fbff" />
      <rect x="901" y="359" width="57" height="3" fill="#e4fbff" />
      <path d="M848.500 359v-2h2v-2h6v2h2v2M924.500 359v-2h2v-2h6v2h2v2" fill="none" stroke="#fff" />
      <g fill="#ccfdff">
        <rect x="816" y="367" width="73" height="24" />
        <rect x="891" y="367" width="75" height="24" />
        <rect x="816" y="396" width="73" height="41" />
        <rect x="891" y="396" width="75" height="41" />
      </g>
      <path d="M816 396.500h150" stroke="#ddd3cf" />
      <path d="M889.500 367v70" stroke="#1c2438" />
      <ControlPanel x={837} y={371} />
      <ControlPanel x={913} y={371} />
      <path d="M857 403h1" stroke="#333" />
      <g fill="#c9fff2" stroke="#27b99a">
        <path d="M815 442h7l-2 4z" /><circle cx="820" cy="447" r="3.500" />
        <path d="M961 442h7l-3 4z" /><circle cx="962.500" cy="447" r="3.500" />
      </g>
      <DimH x1={810.5} x2={971.5} y={329.5} e1={363} e2={363} label="1482" />
      <DimH x1={811.5} x2={970.5} y={340.5} e1={363} e2={363} label="1464" />
      <DimH x1={881.5} x2={900.5} y={350.5} e1={359} e2={359} label="170" />
      <DimV x={778.5} y1={359.5} y2={451.5} e1={825} e2={820} label="852" />
      <DimV x={790.5} y1={359.5} y2={441.5} e1={825} e2={812} label="759" />
      <DimV x={804.5} y1={362.5} y2={451.5} e1={812} e2={812} label="822" />
      <g fill={Y}><Note x={856} y={468}>比例</Note><Note x={881} y={468}>0.060</Note></g>
    </g>
  );
}

function RightView() {
  return (
    <g>
      <rect x="1018" y="363" width="34" height="78" fill="#fff" />
      <path d="M1020.500 366v15M1049.500 366v15M1020 366.500h30" stroke="#12213d" />
      <path d="M1022 382h8M1034 382h14" stroke="#12213d" />
      <rect x="1032" y="385" width="18" height="6" fill="#001130" />
      <rect x="1032" y="429" width="18" height="8" fill="#001130" />
      <rect x="1020" y="435" width="12" height="2" fill="#001130" />
      <rect x="1018" y="391" width="32" height="38" fill="#fff23a" />
      <path d="M1017.500 383v52" stroke="#c5f3ff" strokeWidth="2" />
      <rect x="1053" y="370" width="8" height="4" fill="#e21fd8" />
      <rect x="1061" y="366" width="58" height="75" fill="#fff" />
      <rect x="1066" y="367" width="51" height="70" fill="#ffffe2" />
      <path d="M1065.500 367v70" stroke="#333" />
      <rect x="1060" y="363" width="60" height="4" fill="#fff" />
      <rect x="1072" y="359" width="36" height="3" fill="#e4fbff" />
      <rect x="1018" y="437" width="101" height="4" fill="#fff" />
      <DimH x1={1015.5} x2={1120.5} y={324.5} e1={383} e2={362} label="964" />
      <DimH x1={1015.5} x2={1052.5} y={339.5} e1={345} e2={363} label="340" />
      <DimH x1={1060.5} x2={1120.5} y={338.5} e1={363} e2={345} label="555" />
      <DimH x1={1072.5} x2={1107.5} y={349.5} e1={359} e2={359} label="330" />
      <DimH x1={1065.5} x2={1114.5} y={452.5} e1={438} e2={438} label="456" />
    </g>
  );
}

function PlanView() {
  return (
    <g>
      <rect x="811" y="560" width="160" height="60" fill="#fff" />
      <g fill="#fff">
        <rect x="855" y="518" width="68" height="4" />
        <rect x="812" y="551" width="4" height="9" /><rect x="820" y="551" width="3" height="9" /><rect x="851" y="551" width="4" height="9" />
        <rect x="899" y="518" width="3" height="42" /><rect x="916" y="518" width="3" height="42" />
        <rect x="923" y="518" width="48" height="34" />
        <rect x="919" y="550" width="4" height="2" />
        <rect x="958" y="552" width="4" height="8" /><rect x="966" y="552" width="4" height="8" />
      </g>
      <rect x="930" y="516" width="38" height="2" fill="#c9fbff" />
      <path d="M922.500 519v32" stroke="#6a74a8" />
      <rect x="812" y="518" width="43" height="32" fill="#fff23a" />
      <rect x="817" y="523" width="34" height="22" fill="#fff" stroke="#e6d820" />
      <path d="M812 550.500h43" stroke="#8a7c10" />
      <path d="M824.500 553v7M882.500 553v7" stroke="#c01fe0" strokeWidth="1.500" />
      <rect x="825" y="572" width="57" height="36" fill="#e2ffff" />
      <rect x="901" y="572" width="57" height="36" fill="#e2ffff" />
      <path d="M825 572.500h57M900.500 608v-35.500h57" fill="none" stroke="#9a9a7a" />
      <path d="M848 590h3" stroke="#99a" strokeDasharray="1 1" />
      <DimV x={785.5} y1={518.5} y2={620.5} e1={812} e2={811} label="944" />
      <DimH x1={824.5} x2={882.5} y={568.5} e1={573} e2={573} label="530" />
      <DimH x1={900.5} x2={957.5} y={568.5} e1={573} e2={573} label="530" />
      <DimV x={820.5} y1={572.5} y2={608.5} e1={824} e2={824} label="330" />
    </g>
  );
}

function IsoFront() {
  return (
    <g>
      <path d="M1077 487l32-4 8 7-38 8z" fill="#4d4a7c" stroke="#e8e8f0" />
      <path d="M1001 516h10v34l-10-11z" fill="#a85f1c" stroke="#333" strokeWidth="0.500" />
      <path d="M1006 517v28" stroke="#5a3012" strokeWidth="2" />
      <path d="M1001 548l10 8" stroke="#888" strokeWidth="2" />
      <path d="M1009 508l14 13 1 52-13-15z" fill="#3b2117" stroke="#c9c9c9" />
      <path d="M1009 508l109-16 15 14-110 15z" fill="#4b4b49" />
      <path d="M1009 508l109-16" stroke="#fff" strokeDasharray="3 2" />
      <path d="M1025 509l46-7 7 6-51 7zM1076 503l46-6 4 5-43 6z" fill="#5e5e5c" stroke="#777" strokeWidth="0.700" />
      <path d="M1072 500l8 13" stroke="#333" />
      <path d="M1024 521l109-15v53l-109 14z" fill="#3b78dc" stroke="#f2f4f8" strokeWidth="2" />
      <path d="M1025 542l107-15" stroke="#f2f4f8" strokeWidth="3" />
      <path d="M1026 544l106-15" stroke="#b4623c" />
      <path d="M1078 514v51" stroke="#f2f4f8" strokeWidth="2" />
      <path d="M1040 523l23-3v14l-23 2z" fill="#151818" />
      <path d="M1093 515l22-3v14l-22 3z" fill="#151818" />
      <path d="M1043 521l18-2v3l-18 2zM1096 513l17-2v3l-17 2z" fill="#c9c9c9" />
      <path d="M1042 531l20-2M1095 523l19-2" stroke="#d8e6dc" strokeWidth="1.500" strokeDasharray="2 3" />
      <path d="M1045 527l15-2M1098 519l14-2" stroke="#d45" strokeDasharray="1 5" />
    </g>
  );
}

function IsoBack() {
  return (
    <g>
      <path d="M1021 640l81 18v44l-43-18-38-14z" fill="#484848" />
      <path d="M1034 633l68 25v8l-68-24z" fill="#108a88" />
      <path d="M1036 643l66 24" stroke="#8a22a8" strokeWidth="1.500" />
      <path d="M1061 645l3 6M1095 664l3-5" stroke="#8a22a8" />
      <path d="M1103 657l24-17v49l-24 14z" fill="#6a3524" />
      <path d="M1037 603l91 35-26 21-90-36z" fill="#5d5d5d" stroke="#767676" />
      <path d="M1067 619l-10 10-14 6M1069 620l48 22" stroke="#707070" strokeWidth="0.700" fill="none" />
      <path d="M1128 638l-26 20v5l25-20z" fill="#6c6c6c" />
      <path d="M1023 671l39 15M1021 688l26-12M1032 693l22-12M1041 697l20-10" stroke="#c4c4c8" strokeWidth="2" />
      <path d="M994 633l15-10 26 11-14 11z" fill="#5b5aa6" stroke="#d0d0d8" strokeDasharray="2 1" />
      <path d="M995 634l26 11v9l-26-9z" fill="#b26fc4" />
      <path d="M1021 645l14-10v10l-14 9z" fill="#9c6ab4" />
      <path d="M994 646l25 8v34l-25-8z" fill="#0f9b97" />
      <path d="M994 645.500l27 9" stroke="#c6a72e" strokeWidth="1.500" />
      <path d="M1017 653v34" stroke="#8c4b3a" strokeWidth="2" />
      <path d="M1059 675l14-6 25 8v24l-15 9-24-12z" fill="#9b5417" />
      <path d="M1083 684l15-7v24l-15 9z" fill="#84450f" />
      <path d="M1064 676l9-7 19 5-10 9z" fill="#bdbdbd" stroke="#8b6a40" />
      <g fill="none" stroke="#b0b0b6" strokeWidth="2">
        <path d="M994 633v48l89 35 44-26v-50M1020.500 653v36M1034.500 634v46M1057.500 641v43" />
        <path d="M1102.500 659v45" strokeWidth="3" />
        <path d="M1083 708l20-9M1021 672l13 5" />
      </g>
      <g fill="#1fae8d">
        <circle cx="999" cy="685" r="3" /><circle cx="1081" cy="718" r="3" /><circle cx="1123" cy="690" r="2" />
      </g>
      <g fill={Y}><Note x={1028} y={737}>比例</Note><Note x={1051} y={737}>0.043</Note></g>
    </g>
  );
}

function TitleBlockLines() {
  return (
    <g fill="none" stroke={Y}>
      <rect x="1093.500" y="743.500" width="259.500" height="58.500" fill="#041022" />
      <path d="M1093 767.500h260M1093 778.500h191M1093 790.500h260M1215 755.500h138" />
      <path d="M1120.500 767v35M1153.500 767v35M1171.500 767v35M1215.500 743v59M1233.500 743v59M1266.500 743v24M1266.500 790v12M1284.500 743v59" />
    </g>
  );
}

function TitleBlockText() {
  return (
    <g>
      <g fill={Y}>
        <Note x={1101} y={760} size={9}>深圳市</Note>
        <Note x={1149} y={760} size={9}>达电子有限公司</Note>
        <Note x={1101} y={776} size={6}>设计</Note><Note x={1099} y={788} size={6}>校对</Note><Note x={1101} y={799} size={6}>批准</Note>
        {[776, 788, 799].map((y) => (
          <g key={y}><Note x={1156} y={y} size={6}>日期</Note><Note x={1177} y={y} size={7}>Dec-15-20</Note></g>
        ))}
        <Note x={1217} y={764} size={6}>数量</Note><Note x={1237} y={764} size={6}>1</Note>
        <Note x={1218} y={776} size={6}>材质</Note><Note x={1236} y={776} size={6}>SUS</Note>
        <Note x={1218} y={788} size={6}>类型</Note><Note x={1237} y={788} size={6}>整机</Note>
        <Note x={1218} y={799} size={6}>比例</Note><Note x={1236} y={799} size={6}>0.043</Note>
        <Note x={1269} y={752} size={6}>名称</Note><Note x={1288} y={752} size={6}>总装配图</Note>
        <Note x={1268} y={764} size={6}>图号</Note><Note x={1287} y={764} size={6}>ASM0001</Note>
        <Note x={1287} y={799} size={6}>版本:</Note>
      </g>
      <path d="M1133 752c6-3 11-1 14 3v9c-5 3-9 4-13 1zM1125 768c8-2 18-1 26 1v20c-9 2-19 1-26-1z" fill="#000" />
      <path d="M1136 780h2" stroke="#eee" />
    </g>
  );
}

function Watermark() {
  return (
    <g>
      <rect x="1164" y="751" width="206" height="61" fill="#fff" opacity="0.32" />
      <g fill="none" opacity="0.85">
        <path d="M1177 758c-14 0-14 26 3 28 14 0 12-26-2-27" stroke="#43607e" strokeWidth="2" />
        <path d="M1167 764c2-5 6-8 12-7" stroke="#2d8a6c" strokeWidth="3" />
        <path d="M1184 780c-8 16 4 28 18 26" stroke="#5c5f8e" strokeWidth="2" />
        <path d="M1211 772c14 8 14 22-2 32-4 3-9 4-14 4 16-6 26-18 16-36z" fill="#a3243a" />
      </g>
      <text x="1235" y="784" fontSize="29" fontWeight="bold" fontFamily="'Noto Sans CJK SC', sans-serif" fill="#1b6f62" opacity="0.85">野火论坛</text>
      <text x="1231" y="804" fontSize="15" fontFamily="'Liberation Sans', sans-serif" fill="#5c7394" opacity="0.8">www.proewildfire.cn</text>
    </g>
  );
}

function Drawing() {
  return (
    <svg className="block h-full w-full" viewBox="374 164 1001 654" fontFamily={cad} role="img" aria-label="总装配图">
      <SheetFrame />
      <LeftView />
      <FrontView />
      <RightView />
      <PlanView />
      <IsoFront />
      <IsoBack />
      <BillOfMaterials />
      <TitleBlockLines />
      <g fill={Y}>
        <Note x={632} y={759} size={9}>技术要求:</Note>
        <Note x={632} y={768} size={9}>1.零件加工表面上，不应有划痕，擦伤等损伤零件表面的缺陷。</Note>
        <Note x={632} y={778} size={9}>2.去除毛刺飞边。</Note>
        <Note x={632} y={787} size={9}>3.未注形状公差应符合GB1184-2000.</Note>
        <Note x={632} y={797} size={9}>4.未标注尺寸公差应该按照GB/T1804-m</Note>
      </g>
      <Watermark />
      <TitleBlockText />
    </svg>
  );
}

const viewTools = [
  { name: "重新调整", icon: <Magnifier boxed /> },
  { name: "放大", icon: <Magnifier><path d="M4 6.500h5M6.500 4v5" stroke="#174e66" strokeWidth="1.500" /></Magnifier> },
  { name: "缩小", icon: <Magnifier><path d="M4 6.500h5" stroke="#174e66" strokeWidth="1.500" /></Magnifier> },
  { name: "重画", icon: <Repaint /> },
  { name: "显示样式", icon: <Cube />, menu: true },
  { name: "视图管理器", icon: <FadedCube />, menu: true },
  { name: "基准显示", icon: <DatumFilter />, menu: true },
];

function Canvas() {
  return (
    <main className="relative min-w-0 flex-1 bg-[#001130]">
      <Drawing />
      <div className="absolute right-[178px] top-[7px] flex h-8 items-center border border-[#c3c9cf] bg-[#f8f8f8] pl-[2px] pr-[6px]">
        {viewTools.map((t) => (
          <button key={t.name} aria-label={t.name} className="relative flex h-[22px] w-[26px] items-center justify-center">
            {t.icon}
            {t.menu && (
              <svg width="4" height="4" viewBox="0 0 4 4" className="absolute bottom-0 right-0" aria-hidden="true"><path d="M4 0v4H0z" fill="#555" /></svg>
            )}
          </button>
        ))}
      </div>
    </main>
  );
}

export default function App() {
  return (
    <div className="flex h-screen flex-col overflow-hidden bg-[#e2e2e2] font-['Noto_Sans','Noto_Sans_CJK_SC',sans-serif]">
      <Ribbon />
      <div className="flex min-h-0 flex-1">
        <SidePanel />
        <Canvas />
      </div>
    </div>
  );
}
